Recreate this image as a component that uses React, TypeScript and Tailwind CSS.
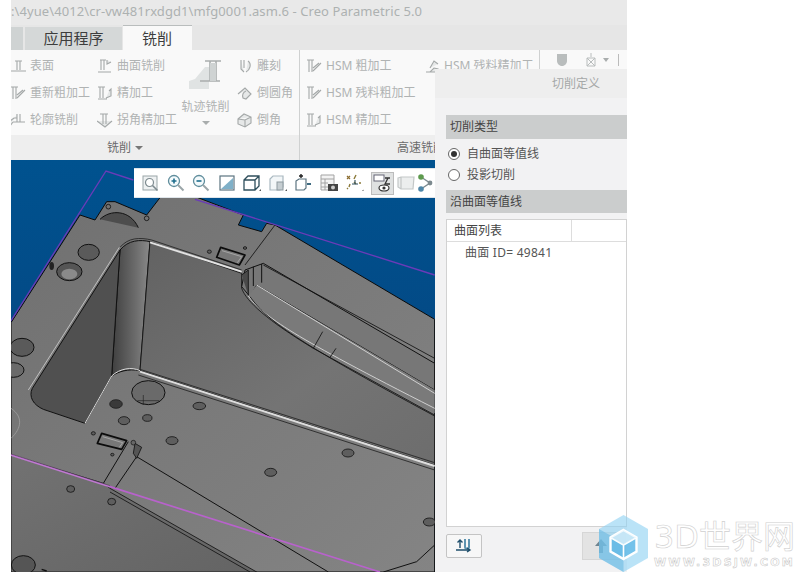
const cjk = "font-['Noto_Sans','Noto_Sans_CJK_SC',sans-serif]";

// faded ribbon icons, all on a 16px box
const ribbonPaths: Record<string, string> = {
  surface: 'M5 3h7M7 3v9M10 3v9M0 13h16',
  mill: 'M3 2h6M4 2v10M7 2v10M10 2v4l4-2M1 14h13',
  rough: 'M1 2h7M3 2v12M6 2v12M7 13l8-8M7 10l6-5',
  finish: 'M1 2h7M3 2v11M6 2v11M9 13l5-2V4l-2 2M1 14h9',
  profile: 'M0 14V9l4-3h3V2M7 2v8M10 2v8M3 10h12M0 14l3-4',
  corner: 'M3 2h8M6 2v10M9 2v10M0 9l8 6 7-6',
  engrave: 'M4 2v9l3 3M7 2v8M11 3c4 3 2 9-2 11',
  round: 'M1 9l7-6 6 6-5 5-3-1c-1-3 0-6 3-7',
  chamfer: 'M1 7l6-5 7 3v6l-6 4-7-3zM8 8v7M1 7l7 1 6-3',
  hsm: 'M2 14h4l4-4 4 1-1 3H2M6 10l4-7 4 3',
};

const RibbonIcon = ({ name }: { name: string }) => (
  <svg width="16" height="16" viewBox="0 0 16 16" fill="#e6e8e8" stroke="#a4a8a8" strokeWidth="1.1" className="shrink-0">
    <path d={ribbonPaths[name]} />
  </svg>
);

const RibbonItem = ({ icon, label }: { icon: string; label: string }) => (
  <div className="flex h-[27px] items-center gap-[4px] whitespace-nowrap">
    <RibbonIcon name={icon} />
    <span>{label}</span>
  </div>
);

const ToolIcon = ({ children }: { children: React.ReactNode }) => (
  <svg width="20" height="20" viewBox="0 0 20 20" fill="none" className="shrink-0">
    {children}
  </svg>
);

const toolIcons = [
  <ToolIcon key="fit">
    <rect x="3" y="3" width="14" height="14" fill="#eef1f2" stroke="#9aa5a8" />
    <circle cx="9.500" cy="9.500" r="4" fill="#fff" stroke="#7d8a8f" strokeWidth="1.2" />
    <path d="M12.500 12.500l5 5" stroke="#7d8a8f" strokeWidth="1.6" />
  </ToolIcon>,
  <ToolIcon key="in">
    <circle cx="8" cy="8" r="5.500" fill="#f4fafc" stroke="#5f8d9c" strokeWidth="1.3" />
    <path d="M5.500 8h5M8 5.500v5" stroke="#1d6d8c" strokeWidth="1.6" />
    <path d="M12 12l5.500 5.500" stroke="#9aa5a8" strokeWidth="2" />
  </ToolIcon>,
  <ToolIcon key="out">
    <circle cx="8" cy="8" r="5.500" fill="#f4fafc" stroke="#5f8d9c" strokeWidth="1.3" />
    <path d="M5.500 8h5" stroke="#1d6d8c" strokeWidth="1.6" />
    <path d="M12 12l5.500 5.500" stroke="#9aa5a8" strokeWidth="2" />
  </ToolIcon>,
  <ToolIcon key="refit">
    <rect x="3" y="3" width="14" height="14" fill="#fff" stroke="#5c7480" strokeWidth="1.2" />
    <path d="M4 16L16 5v11z" fill="#7fb0c8" />
  </ToolIcon>,
  <ToolIcon key="cube">
    <path d="M2 7l4-4h11v10l-4 4H2zM2 7h11v10M13 7l4-4" fill="#fff" stroke="#2f4f5c" strokeWidth="1.3" />
    <path d="M17 18h2v-2z" fill="#555" />
  </ToolIcon>,
  <ToolIcon key="views">
    <path d="M2 6l3-3h10v11l-3 3H2z" fill="#f2f6f8" stroke="#a9b8c0" strokeWidth="1.2" />
    <rect x="9" y="9" width="6" height="8" fill="#c6ced2" stroke="#8d999f" />
    <path d="M17 18h2v-2z" fill="#555" />
  </ToolIcon>,
  <ToolIcon key="spin">
    <path d="M3 8l3-2h7v9l-2 2H3z" fill="#fff" stroke="#5c7480" strokeWidth="1.2" />
    <path d="M8 1v4M6 3h4" stroke="#222" strokeWidth="1.4" />
    <path d="M14 11h4" stroke="#3d6a80" strokeWidth="2" />
  </ToolIcon>,
  <ToolIcon key="shot">
    <path d="M2 2h13v15H2z" fill="#f3f3f3" stroke="#a3a3a3" />
    <path d="M2 6h13M2 10h7M2 14h7M6 6v11" stroke="#a3a3a3" />
    <rect x="9" y="11" width="10" height="7" fill="#444" />
    <circle cx="14" cy="14.500" r="2" fill="#ccc" />
  </ToolIcon>,
  <ToolIcon key="points">
    <path d="M3 3l3 3M6 3L3 6" stroke="#8b6d30" strokeWidth="1.2" />
    <path d="M12 2l-2 4M10 9l2 2M6 11l-1 3M3 16l1-1M15 10h2" stroke="#8b7a3a" strokeWidth="1.4" />
    <path d="M11 7v4M8 11h6" stroke="#2f4f5c" strokeWidth="1.1" />
    <path d="M18 18h1.500v-1.500z" fill="#555" />
  </ToolIcon>,
  <ToolIcon key="display">
    <rect x="2" y="2" width="10" height="6" fill="#fff" stroke="#667" />
    <path d="M13 5h5M16 5l-3 6h5" stroke="#333" strokeWidth="1.3" />
    <ellipse cx="12" cy="15" rx="5" ry="3" fill="#fff" stroke="#333" strokeWidth="1.2" />
    <circle cx="12" cy="15" r="1.600" fill="#333" />
  </ToolIcon>,
  <ToolIcon key="box">
    <path d="M2 5l3-1h13l-1 12H5l-3-2zM5 4v12" fill="#eceeee" stroke="#c3c7c7" strokeWidth="1.2" />
  </ToolIcon>,
  <ToolIcon key="branch">
    <path d="M4 4l9 6-9 6" stroke="#7d8a8f" strokeWidth="1.4" />
    <circle cx="4" cy="4" r="2.800" fill="#5d9a4e" />
    <circle cx="13" cy="10" r="2.400" fill="#7d8a8f" />
    <circle cx="4" cy="16" r="2.800" fill="#4e86a8" />
  </ToolIcon>,
];

// big mould part in the graphics window, coordinates are 3x page pixels
const Model = () => {
  const holes: [number, number, number, number][] = [
    [598, 738, 19, 11], [442, 774, 14, 10], [372, 782, 17, 12], [516, 842, 18, 12],
    [1044, 879, 18, 12], [812, 937, 18, 12], [1288, 1086, 18, 12], [628, 275, 6, 5],
    [735, 264, 5, 4], [280, 820, 6, 5], [212, 987, 12, 10], [335, 1025, 12, 10], [337, 884, 5, 4],
  ];
  return (
    <svg viewBox="33 0 1272 1236" className="block h-full w-full blur-[0.35px]" preserveAspectRatio="none">
      <defs>
        <linearGradient id="sky" x1="0" y1="0" x2="0" y2="1">
          <stop offset="0" stopColor="#00528f" />
          <stop offset="0.4" stopColor="#034a86" />
          <stop offset="1" stopColor="#023a6c" />
        </linearGradient>
        <linearGradient id="top" x1="0" y1="0" x2="1" y2="1">
          <stop offset="0" stopColor="#707070" />
          <stop offset="1" stopColor="#848484" />
        </linearGradient>
        <linearGradient id="floor" x1="0" y1="0" x2="1" y2="1">
          <stop offset="0" stopColor="#626262" />
          <stop offset="0.6" stopColor="#747474" />
          <stop offset="1" stopColor="#6d6d6d" />
        </linearGradient>
        <linearGradient id="cyl" x1="0" y1="0" x2="1" y2="0">
          <stop offset="0" stopColor="#3f3f3f" />
          <stop offset="0.6" stopColor="#6a6a6a" />
          <stop offset="1" stopColor="#8a8a8a" />
        </linearGradient>
        <linearGradient id="flange" x1="0" y1="0" x2="1" y2="1">
          <stop offset="0" stopColor="#727272" />
          <stop offset="1" stopColor="#646464" />
        </linearGradient>
      </defs>
      <rect x="33" y="0" width="1272" height="1236" fill="url(#sky)" />

      {/* body */}
      <path
        d="M33 488L240 165L285 180L320 125L345 125L440 165L490 100L560 100L730 165L715 195L785 215L800 190L825 195L1304 478V1236H33Z"
        fill="url(#top)" stroke="#0a0a0a" strokeWidth="3"
      />
      {/* boss behind the corner */}
      <path d="M300 178c30-30 90-30 115 25" fill="#4d4d4d" stroke="#111" strokeWidth="3" />
      <circle cx="325" cy="140" r="7" fill="none" stroke="#111" strokeWidth="2.500" />
      <circle cx="440" cy="175" r="7" fill="none" stroke="#111" strokeWidth="2.500" />

      {/* lower flange */}
      <path d="M33 885L310 970L330 985L770 1236H33Z" fill="url(#flange)" stroke="#111" strokeWidth="2.500" />
      <path d="M330 996L750 1236" stroke="#111" strokeWidth="2.500" />
      <path d="M310 970L385 845M345 985L410 890L985 1236" fill="none" stroke="#111" strokeWidth="3" />

      {/* pocket */}
      <path d="M360 270C385 240 420 238 450 245L420 632C385 625 355 635 335 648Z" fill="url(#cyl)" stroke="#111" strokeWidth="3" />
      <path d="M360 270L97 685C85 710 100 735 130 748L255 790L335 648Z" fill="#505050" stroke="#111" strokeWidth="3" />
      <path d="M450 245L725 340V385C740 425 800 480 940 565L1304 765V915L420 632Z" fill="url(#floor)" stroke="#111" strokeWidth="2.500" />
      <path d="M450 247L725 335" stroke="#e2e2e2" strokeWidth="6" />
      <path d="M420 635L1304 918" stroke="#dedede" strokeWidth="6" />
      <path d="M415 645L1304 930" stroke="#222" strokeWidth="2.500" />
      <path d="M420 628L1304 908" stroke="#222" strokeWidth="2.500" />
      <path d="M255 790L335 648C360 625 395 620 420 632" fill="none" stroke="#ddd" strokeWidth="3" />
      <path d="M360 262C385 232 420 232 455 240L725 330" fill="none" stroke="#222" strokeWidth="2.500" />
      <path d="M85 690L358 262" stroke="#cfcfcf" strokeWidth="2.500" />

      {/* side channel */}
      <path d="M735 330L790 310L1304 610V690L770 375L750 410L725 380Z" fill="#777" stroke="#111" strokeWidth="3" />
      <path d="M770 375L745 408C790 470 880 530 1304 760V690Z" fill="#7a7a7a" />
      <path d="M760 320V378M785 312V368" stroke="#111" strokeWidth="3" />
      <path d="M725 345L745 330V405" fill="#4a4a4a" stroke="#111" strokeWidth="2.500" />
      <path d="M770 375L1304 700M745 408C790 470 880 530 1304 745" fill="none" stroke="#cfcfcf" strokeWidth="3" />
      <path d="M750 410C800 480 880 540 1304 768M790 315L1304 595" fill="none" stroke="#111" strokeWidth="2.500" />
      <path d="M968 515L940 565M1008 565L990 592" stroke="#111" strokeWidth="2.500" />
      <path d="M735 315L825 195" stroke="#111" strokeWidth="2.500" />

      {/* holes */}
      <ellipse cx="266" cy="277" rx="32" ry="24" fill="#5a5a5a" stroke="#111" strokeWidth="3" />
      <ellipse cx="208" cy="335" rx="38" ry="27" fill="#555" stroke="#111" strokeWidth="3" />
      <ellipse cx="208" cy="342" rx="24" ry="16" fill="#8a8a8a" />
      <ellipse cx="155" cy="318" rx="7" ry="12" fill="#222" />
      <ellipse cx="66" cy="562" rx="36" ry="27" fill="#5a5a5a" stroke="#111" strokeWidth="3" />
      <ellipse cx="40" cy="630" rx="32" ry="22" fill="#6a6a6a" stroke="#111" strokeWidth="3" />
      <ellipse cx="445" cy="698" rx="50" ry="36" fill="#6a6a6a" stroke="#111" strokeWidth="3" />
      <path d="M412 722h66M430 705v30" stroke="#222" strokeWidth="2" />
      <ellipse cx="348" cy="732" rx="19" ry="13" fill="#3a3a3a" stroke="#111" strokeWidth="2" />
      <path d="M33 745C70 770 65 805 33 835" fill="none" stroke="#a8a8a8" strokeWidth="2" />
      <ellipse cx="70" cy="1215" rx="36" ry="28" fill="#555" stroke="#111" strokeWidth="3" />
      <path d="M125 1228l15 5" stroke="#111" strokeWidth="4" />
      <path d="M1150 1236L1250 1205L1304 1155" fill="none" stroke="#111" strokeWidth="3" />
      {holes.map(([cx, cy, rx, ry], i) => (
        <ellipse key={i} cx={cx} cy={cy} rx={rx} ry={ry} fill="#5e5e5e" stroke="#151515" strokeWidth="2.500" />
      ))}

      {/* slots */}
      <path d="M662 262L735 285L718 315L650 292Z" fill="#777" stroke="#0c0c0c" strokeWidth="5" strokeLinejoin="round" />
      <path d="M666 272L725 290L712 308" fill="none" stroke="#bbb" strokeWidth="2" />
      <path d="M305 820L380 842L365 868L292 850Z" fill="#777" stroke="#0c0c0c" strokeWidth="5" strokeLinejoin="round" />
      <path d="M308 830L368 848L358 862" fill="none" stroke="#bbb" strokeWidth="2" />
      <path d="M405 850L425 862L410 895L400 880Z" fill="#555" stroke="#111" strokeWidth="2.500" />
      <circle cx="400" cy="848" r="7" fill="#666" stroke="#111" strokeWidth="2" />

      {/* tool path outlines */}
      <path d="M33 482L318 33L400 60M585 118L1304 345" fill="none" stroke="#6a3bb8" strokeWidth="4" />
      <path d="M33 885L330 980" stroke="#c07ad2" strokeWidth="6" />
      <path d="M33 882L330 977" stroke="#3a2a40" strokeWidth="1.500" />
      <path d="M330 980L1140 1236" stroke="#b862cc" strokeWidth="5" />
    </svg>
  );
};

const Watermark = () => (
  <div className="pointer-events-none absolute top-[515px] left-[599px] flex items-start gap-[6px]">
    <svg width="49" height="57" viewBox="0 0 49 57" className="shrink-0">
      <path d="M24.500 0L49 14v29L24.500 57 0 43V14z" fill="#8fd2f2" fillOpacity="0.62" />
      <path d="M0 14v29l24.500 14V28z" fill="#5fb4e0" fillOpacity="0.5" />
      <path d="M24.500 15l13 7.500v14L24.500 44l-13-7.500v-14z" fill="#63b9e6" fillOpacity="0.8" stroke="#fff" strokeWidth="2.400" />
      <path d="M11.500 22.500l13 7.500 13-7.500M24.500 30v14" fill="none" stroke="#fff" strokeWidth="1.600" />
      <path d="M11.500 22.500l13-7.500 13 7.500-13 7.500z" fill="#eaf6fc" fillOpacity="0.7" />
    </svg>
    <div className="flex flex-col items-start font-['DejaVu_Sans','Noto_Sans_CJK_SC',sans-serif]">
      <span className="mt-[3px] text-[32px] leading-[38px] whitespace-nowrap text-white [-webkit-text-stroke:0.6px_#cfcfcf]">
        3D世界网
      </span>
      <span className="text-[11px] leading-[14px] font-bold tracking-[2.2px] whitespace-nowrap text-white [-webkit-text-stroke:0.5px_#c4c4c4]">
        WWW.3DSJW.COM
      </span>
    </div>
  </div>
);

export default function App() {
  return (
    <div className={`relative h-[582px] w-[800px] overflow-hidden bg-white ${cjk}`}>
      <div className="relative ml-[11px] flex h-[572px] w-[616px] flex-col overflow-hidden">
        {/* title bar */}
        <div className="h-[25px] shrink-0 overflow-hidden bg-[#e9e9e9] pt-[1px] text-[13px] leading-[20px] tracking-[0.08px] whitespace-nowrap text-[#adb1b1]">
          :\4yue\4012\cr-vw481rxdgd1\mfg0001.asm.6 - Creo Parametric 5.0
        </div>

        {/* tabs */}
        <div className="flex h-[25px] shrink-0 items-end bg-[#e6e6e6] text-[15px] text-[#3d3d3d]">
          <div className="h-[23px] w-[12px] bg-[#cfd3d3]" />
          <div className="mr-[1px] ml-[2px] flex h-[23px] w-[97px] items-center justify-center bg-[#d5d8d8]">
            应用程序
          </div>
          <div className="flex h-[25px] w-[69px] items-center justify-center border-t border-[#b9bdbd] bg-[#f9f9f9] pr-[1px]">
            铣削
          </div>
        </div>

        {/* ribbon */}
        <div className="flex h-[85px] shrink-0 bg-[#f9f9f9] text-[12px] leading-[16px] text-[#b0b3b3]">
          <div className="flex w-[288px] shrink-0 pt-[2px]">
            <div className="-ml-[1px] flex w-[87px] flex-col">
              <RibbonItem icon="surface" label="表面" />
              <RibbonItem icon="rough" label="重新粗加工" />
              <RibbonItem icon="profile" label="轮廓铣削" />
            </div>
            <div className="flex w-[85px] flex-col">
              <RibbonItem icon="mill" label="曲面铣削" />
              <RibbonItem icon="finish" label="精加工" />
              <RibbonItem icon="corner" label="拐角精加工" />
            </div>
            <div className="flex w-[47px] flex-col items-center">
              <svg width="34" height="34" viewBox="0 0 34 34" fill="none" className="mt-[5px] shrink-0">
                <path d="M0 32V24l6-2 10-12h4v22z" fill="#e0e3e3" />
                <path d="M16 4h16M21 4v20M27 4v20M11 24h20" stroke="#a9adad" strokeWidth="1.600" />
                <path d="M21 6h6v18h-6z" fill="#cfd3d3" />
              </svg>
              <span className="mt-[8px] whitespace-nowrap">轨迹铣削</span>
              <span className="mt-[6px] h-0 w-0 border-x-[4px] border-t-[4px] border-x-transparent border-t-[#a9adad]" />
            </div>
            <div className="ml-[8px] flex flex-col">
              <RibbonItem icon="engrave" label="雕刻" />
              <RibbonItem icon="round" label="倒圆角" />
              <RibbonItem icon="chamfer" label="倒角" />
            </div>
          </div>
          <div className="h-full w-px bg-[#cfd1d1]" />
          <div className="flex pt-[2px] pl-[6px]">
            <div className="flex w-[117px] flex-col">
              <RibbonItem icon="rough" label="HSM 粗加工" />
              <RibbonItem icon="rough" label="HSM 残料粗加工" />
              <RibbonItem icon="finish" label="HSM 精加工" />
            </div>
            <div className="flex w-[116px] flex-col pl-[1px]">
              <RibbonItem icon="hsm" label="HSM 残料精加工" />
            </div>
          </div>
          <div className="h-[19px] w-px bg-[#cfd1d1]" />
          <div className="flex h-[19px] items-center pl-[15px]">
            <svg width="14" height="14" viewBox="0 0 14 14" fill="#b9bdbd" className="shrink-0">
              <path d="M2 1h10v7c0 3-3 5-5 5s-5-2-5-5z" />
            </svg>
            <svg width="14" height="14" viewBox="0 0 14 14" fill="none" stroke="#b9bdbd" className="ml-[15px] shrink-0">
              <path d="M7 0v4M3 5h8v8H3zM3 5l8 8M11 5l-8 8" />
            </svg>
            <span className="ml-[5px] h-0 w-0 border-x-[3px] border-t-[4px] border-x-transparent border-t-[#a9adad]" />
            <span className="ml-[9px] h-[12px] w-px bg-[#bbb]" />
          </div>
        </div>

        {/* group labels */}
        <div className="flex h-[25px] shrink-0 items-center bg-[#eeeeee] text-[12px] text-[#6b6b6b]">
          <div className="flex w-[288px] items-center justify-center gap-[4px] pr-[60px]">
            <span>铣削</span>
            <span className="h-0 w-0 border-x-[4px] border-t-[4px] border-x-transparent border-t-[#777]" />
          </div>
          <div className="h-full w-px bg-[#cfd1d1]" />
          <span className="ml-[97px] whitespace-nowrap">高速铣削</span>
        </div>

        {/* graphics window */}
        <div className="relative h-[412px] w-[424px] shrink-0 overflow-hidden">
          <Model />
          <div className="absolute top-[8px] left-[123px] flex h-[30px] w-[301px] items-center gap-[5.5px] border-y border-[#dfe5ea] bg-white pl-[6px]">
            {toolIcons.map((icon, i) => (
              <div
                key={i}
                className={
                  i === 9
                    ? '-mr-[1.5px] ml-[1px] flex h-[23px] w-[23px] shrink-0 items-center justify-center border border-[#bcbcbc] bg-[#dfe1e1]'
                    : i === 10
                      ? '-ml-[2px] flex h-[20px] w-[20px] shrink-0 items-center justify-center'
                      : i === 11
                        ? '-ml-[4px] flex h-[20px] w-[20px] shrink-0 items-center justify-center'
                        : 'flex h-[20px] w-[20px] shrink-0 items-center justify-center'
                }
              >
                {icon}
              </div>
            ))}
          </div>
        </div>

        {/* cut definition dialog */}
        <div className="absolute top-[69px] left-[424px] flex h-[503px] w-[192px] flex-col bg-[#f1f1f1] text-[12px] text-[#555]">
          <div className="flex h-[29px] shrink-0 items-center bg-[#eeeeee] pl-[117px] text-[#a5a8a8]">切削定义</div>
          <div className="flex min-h-0 flex-1 flex-col bg-[#f2f2f3] pt-[16px] pl-[11px]">
            <div className="mt-[1px] flex h-[24px] shrink-0 items-center bg-[#cbcdcd] pl-[4px] text-[#444]">切削类型</div>
            <div className="flex flex-col gap-[2px] pt-[5px] pl-[2px]">
              <label className="flex h-[19px] items-center gap-[7px]">
                <span className="flex h-[12px] w-[12px] items-center justify-center rounded-full border border-[#666] bg-white">
                  <span className="h-[6px] w-[6px] rounded-full bg-[#333]" />
                </span>
                自曲面等值线
              </label>
              <label className="flex h-[19px] items-center gap-[7px]">
                <span className="h-[12px] w-[12px] rounded-full border border-[#666] bg-white" />
                投影切削
              </label>
            </div>
            <div className="mt-[6px] flex h-[23px] shrink-0 items-center bg-[#cbcdcd] pl-[4px] text-[#444]">沿曲面等值线</div>

            <div className="mt-[6px] flex h-[308px] shrink-0 flex-col border border-[#d2d2d2] bg-white">
              <div className="flex h-[22px] shrink-0 border-b border-[#dddddd]">
                <div className="flex w-[125px] items-center border-r border-[#dddddd] pl-[7px] text-[#444]">曲面列表</div>
              </div>
              <div className="pt-[3px] pl-[18px] text-[12px] leading-[16px] tracking-[0.25px]">曲面 ID= 49841</div>
            </div>

            <div className="mt-[7px] flex items-start">
              <button className="flex h-[24px] w-[36px] items-center justify-center rounded-[2px] border border-[#c4c4c4] bg-[#f7f7f7]">
                <svg width="18" height="18" viewBox="0 0 18 18" fill="none" stroke="#1f4f6c" strokeWidth="1.400">
                  <path d="M5 11V3M2.500 5.500L5 3l2.500 2.500" />
                  <path d="M10 2v8c0 2 4 2 4 0V2" stroke="#5d93b0" strokeWidth="2" />
                  <path d="M1 13h14M12 11l3 2-3 2" />
                </svg>
              </button>
              <button className="ml-[100px] flex h-[28px] w-[44px] -translate-y-[2px] items-center justify-center border border-[#d6d6d6] bg-[#e3e3e3] pr-[6px]">
                <svg width="16" height="16" viewBox="0 0 16 16" fill="#6f8490">
                  <path d="M8 1l6 7h-4v7H6V8H2z" />
                </svg>
              </button>
            </div>
          </div>
        </div>
      </div>
      <Watermark />
    </div>
  );
}
